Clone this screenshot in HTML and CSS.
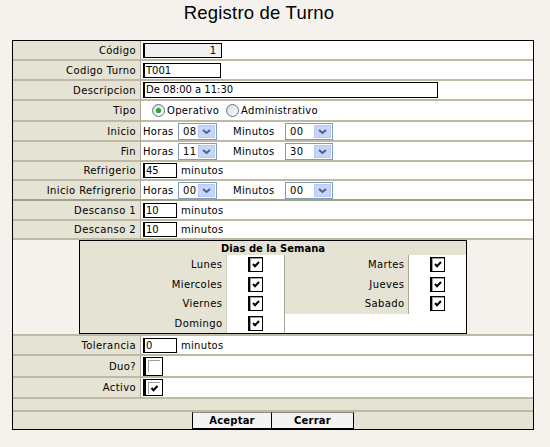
FILE: index.html
```html
<!DOCTYPE html>
<html lang="es">
<head>
<meta charset="utf-8">
<title>Registro de Turno</title>
<link rel="stylesheet" href="styles.css">
</head>
<body>
<div class="title">Registro de Turno</div>
<table class="form">
  <colgroup><col class="c1"><col class="c2"></colgroup>
  <tr><td class="lbl">Código</td><td class="val"><div class="c"><span class="tb ro w79">1</span></div></td></tr>
  <tr><td class="lbl">Codigo Turno</td><td class="val"><div class="c"><span class="tb w78">T001</span></div></td></tr>
  <tr><td class="lbl">Descripcion</td><td class="val"><div class="c"><span class="tb w295 tall">De 08:00 a 11:30</span></div></td></tr>
  <tr><td class="lbl">Tipo</td><td class="val"><div class="c h21">
    <span class="radio r1"><svg width="13" height="13" viewBox="0 0 13 13"><defs><linearGradient id="rg1" x1="0" y1="0" x2="1" y2="1"><stop offset="0" stop-color="#d8d8d2"/><stop offset="1" stop-color="#ffffff"/></linearGradient></defs><circle cx="6.5" cy="6.5" r="6" fill="url(#rg1)" stroke="#5a7694"/><circle cx="6.5" cy="6.5" r="2.6" fill="#2aa52a"/></svg></span>
    <span class="rtxt">Operativo</span>
    <span class="radio r2"><svg width="13" height="13" viewBox="0 0 13 13"><defs><linearGradient id="rg2" x1="0" y1="0" x2="1" y2="1"><stop offset="0" stop-color="#d8d8d2"/><stop offset="1" stop-color="#ffffff"/></linearGradient></defs><circle cx="6.5" cy="6.5" r="6" fill="url(#rg2)" stroke="#5a7694"/></svg></span>
    <span class="rtxt">Administrativo</span>
  </div></td></tr>
  <tr><td class="lbl">Inicio</td><td class="val"><div class="c">
    <span class="t-horas">Horas</span>
    <span class="sel s1"><span class="sv">08</span><svg class="arr" width="17" height="13" viewBox="0 0 17 13"><rect x="0.5" y="0.5" width="16" height="12" fill="#c6d5fb" stroke="#b7c8f5"/><path d="M5 5 L8.5 8 L12 5" fill="none" stroke="#4d6185" stroke-width="2"/></svg></span>
    <span class="t-min">Minutos</span>
    <span class="sel s2"><span class="sv">00</span><svg class="arr" width="17" height="13" viewBox="0 0 17 13"><rect x="0.5" y="0.5" width="16" height="12" fill="#c6d5fb" stroke="#b7c8f5"/><path d="M5 5 L8.5 8 L12 5" fill="none" stroke="#4d6185" stroke-width="2"/></svg></span>
  </div></td></tr>
  <tr><td class="lbl">Fin</td><td class="val"><div class="c">
    <span class="t-horas">Horas</span>
    <span class="sel s1"><span class="sv">11</span><svg class="arr" width="17" height="13" viewBox="0 0 17 13"><rect x="0.5" y="0.5" width="16" height="12" fill="#c6d5fb" stroke="#b7c8f5"/><path d="M5 5 L8.5 8 L12 5" fill="none" stroke="#4d6185" stroke-width="2"/></svg></span>
    <span class="t-min">Minutos</span>
    <span class="sel s2"><span class="sv">30</span><svg class="arr" width="17" height="13" viewBox="0 0 17 13"><rect x="0.5" y="0.5" width="16" height="12" fill="#c6d5fb" stroke="#b7c8f5"/><path d="M5 5 L8.5 8 L12 5" fill="none" stroke="#4d6185" stroke-width="2"/></svg></span>
  </div></td></tr>
  <tr><td class="lbl">Refrigerio</td><td class="val"><div class="c h19"><span class="tb w34">45</span><span class="unit">minutos</span></div></td></tr>
  <tr class="thick"><td class="lbl">Inicio Refrigrerio</td><td class="val"><div class="c">
    <span class="t-horas">Horas</span>
    <span class="sel s1"><span class="sv">00</span><svg class="arr" width="17" height="13" viewBox="0 0 17 13"><rect x="0.5" y="0.5" width="16" height="12" fill="#c6d5fb" stroke="#b7c8f5"/><path d="M5 5 L8.5 8 L12 5" fill="none" stroke="#4d6185" stroke-width="2"/></svg></span>
    <span class="t-min">Minutos</span>
    <span class="sel s2"><span class="sv">00</span><svg class="arr" width="17" height="13" viewBox="0 0 17 13"><rect x="0.5" y="0.5" width="16" height="12" fill="#c6d5fb" stroke="#b7c8f5"/><path d="M5 5 L8.5 8 L12 5" fill="none" stroke="#4d6185" stroke-width="2"/></svg></span>
  </div></td></tr>
  <tr><td class="lbl">Descanso 1</td><td class="val"><div class="c"><span class="tb w34">10</span><span class="unit">minutos</span></div></td></tr>
  <tr><td class="lbl">Descanso 2</td><td class="val"><div class="c h18"><span class="tb w34">10</span><span class="unit">minutos</span></div></td></tr>
  <tr><td colspan="2" class="days-cell">
    <table class="days">
      <colgroup><col class="d1"><col class="d2"><col class="d3"><col class="d4"></colgroup>
      <tr><th colspan="4">Dias de la Semana</th></tr>
      <tr>
        <td class="dl">Lunes</td>
        <td class="dc"><svg class="cb" width="15" height="15" viewBox="0 0 15 15"><rect width="15" height="15" fill="#000"/><rect x="2" y="1" width="12" height="13" fill="#fff"/><rect x="2" y="1" width="12" height="1" fill="#a0a0a0"/><rect x="2" y="1" width="1" height="13" fill="#a0a0a0"/><path d="M5 7 L7 9.2 L11 5" fill="none" stroke="#000" stroke-width="2"/></svg></td>
        <td class="dl2">Martes</td>
        <td class="dc2"><svg class="cb" width="15" height="15" viewBox="0 0 15 15"><rect width="15" height="15" fill="#000"/><rect x="2" y="1" width="12" height="13" fill="#fff"/><rect x="2" y="1" width="12" height="1" fill="#a0a0a0"/><rect x="2" y="1" width="1" height="13" fill="#a0a0a0"/><path d="M5 7 L7 9.2 L11 5" fill="none" stroke="#000" stroke-width="2"/></svg></td>
      </tr>
      <tr>
        <td class="dl">Miercoles</td>
        <td class="dc"><svg class="cb" width="15" height="15" viewBox="0 0 15 15"><rect width="15" height="15" fill="#000"/><rect x="2" y="1" width="12" height="13" fill="#fff"/><rect x="2" y="1" width="12" height="1" fill="#a0a0a0"/><rect x="2" y="1" width="1" height="13" fill="#a0a0a0"/><path d="M5 7 L7 9.2 L11 5" fill="none" stroke="#000" stroke-width="2"/></svg></td>
        <td class="dl2">Jueves</td>
        <td class="dc2"><svg class="cb" width="15" height="15" viewBox="0 0 15 15"><rect width="15" height="15" fill="#000"/><rect x="2" y="1" width="12" height="13" fill="#fff"/><rect x="2" y="1" width="12" height="1" fill="#a0a0a0"/><rect x="2" y="1" width="1" height="13" fill="#a0a0a0"/><path d="M5 7 L7 9.2 L11 5" fill="none" stroke="#000" stroke-width="2"/></svg></td>
      </tr>
      <tr>
        <td class="dl">Viernes</td>
        <td class="dc"><svg class="cb" width="15" height="15" viewBox="0 0 15 15"><rect width="15" height="15" fill="#000"/><rect x="2" y="1" width="12" height="13" fill="#fff"/><rect x="2" y="1" width="12" height="1" fill="#a0a0a0"/><rect x="2" y="1" width="1" height="13" fill="#a0a0a0"/><path d="M5 7 L7 9.2 L11 5" fill="none" stroke="#000" stroke-width="2"/></svg></td>
        <td class="dl2">Sabado</td>
        <td class="dc2"><svg class="cb" width="15" height="15" viewBox="0 0 15 15"><rect width="15" height="15" fill="#000"/><rect x="2" y="1" width="12" height="13" fill="#fff"/><rect x="2" y="1" width="12" height="1" fill="#a0a0a0"/><rect x="2" y="1" width="1" height="13" fill="#a0a0a0"/><path d="M5 7 L7 9.2 L11 5" fill="none" stroke="#000" stroke-width="2"/></svg></td>
      </tr>
      <tr>
        <td class="dl">Domingo</td>
        <td class="dc"><svg class="cb" width="15" height="15" viewBox="0 0 15 15"><rect width="15" height="15" fill="#000"/><rect x="2" y="1" width="12" height="13" fill="#fff"/><rect x="2" y="1" width="12" height="1" fill="#a0a0a0"/><rect x="2" y="1" width="1" height="13" fill="#a0a0a0"/><path d="M5 7 L7 9.2 L11 5" fill="none" stroke="#000" stroke-width="2"/></svg></td>
        <td class="dl2 blank"></td>
        <td class="dc2"></td>
      </tr>
    </table>
  </td></tr>
  <tr><td class="lbl">Tolerancia</td><td class="val"><div class="c"><span class="tb w34">0</span><span class="unit">minutos</span></div></td></tr>
  <tr><td class="lbl">Duo?</td><td class="val"><div class="c h22"><span class="bigcb tallcb"><span class="inner"></span></span></div></td></tr>
  <tr><td class="lbl">Activo</td><td class="val"><div class="c h21"><span class="bigcb"><span class="inner"><svg width="11" height="11" viewBox="0 0 11 11"><path d="M2.5 5 L4.5 7.2 L8.5 3" fill="none" stroke="#000" stroke-width="2"/></svg></span></span></div></td></tr>
  <tr class="empty"><td colspan="2"><div class="c h11"></div></td></tr>
  <tr class="btnrow"><td colspan="2"><div class="btns"><span class="btn b1">Aceptar</span><span class="btn b2">Cerrar</span></div></td></tr>
</table>
</body>
</html>
```

FILE: styles.css
```css
* { box-sizing: border-box; }

body {
  margin: 0;
  background: #f5f2ee;
  font-family: "DejaVu Sans", Verdana, sans-serif;
  font-size: 10px;
  color: #000;
}

.title {
  font-family: "Liberation Sans", Arial, sans-serif;
  font-size: 18.5px;
  letter-spacing: 0.2px;
  text-align: center;
  height: 40px;
  line-height: 25px;
  padding-right: 32px;
}

.form {
  margin-left: 12px;
  width: 522px;
  border: 1px solid #000;
  border-spacing: 0;
  background: #fff;
  table-layout: fixed;
}

.c1 { width: 128px; }

.form > tbody > tr > td,
.form > tr > td {
  padding: 0;
  border-bottom: 2px solid #bdb9a5;
}

.form .lbl {
  background: #e4e3d4;
  text-align: right;
  padding-right: 4px;
  border-right: 1px solid #aca899;
  letter-spacing: 0.4px;
  white-space: nowrap;
}

.form tr.thick > td { border-bottom: 2px solid #a39f8b; }

.c {
  height: 18px;
  display: flex;
  align-items: center;
  padding-left: 2px;
}
.h18 { height: 17px; }
.h19 { height: 17px; }
.h21 { height: 19px; }
.h22 { height: 20px; }
.h11 { height: 11px; }

.tb {
  display: inline-block;
  height: 15px;
  line-height: 13px;
  border: 1px solid #000;
  border-left-width: 2px;
  padding: 0 1px;
  background: #fff;
  white-space: nowrap;
}
.tb.tall { height: 16px; line-height: 14px; }
.tb.ro { background: #f0f0f0; text-align: right; padding-right: 5px; }
.w79 { width: 79px; }
.w78 { width: 78px; }
.w295 { width: 295px; }
.w34 { width: 34px; }

.unit { margin-left: 4px; letter-spacing: 0.3px; }

.radio { display: inline-flex; width: 13px; height: 13px; }
.r1 { margin-left: 9px; margin-right: 2px; }
.r2 { margin-left: 7px; margin-right: 2px; }
.rtxt { letter-spacing: 0.3px; }

.t-horas { width: 35px; letter-spacing: 0.3px; }
.t-min { width: 52px; margin-left: 16px; letter-spacing: 0.3px; }

.sel {
  display: inline-flex;
  align-items: center;
  justify-content: space-between;
  height: 17px;
  border: 1px solid #7f9db9;
  background: #fff;
  padding: 0 1px 0 4px;
}
.s1 { width: 39px; }
.s2 { width: 48px; }
.sv { letter-spacing: 0.5px; }
.arr { display: block; }

.days-cell { background: #f5f2ee; }

.days {
  margin: 0 auto;
  width: 387px;
  border: 1px solid #000;
  border-spacing: 0;
  background: #fff;
  table-layout: fixed;
}
.d1 { width: 147px; }
.d2 { width: 58px; }
.d3 { width: 124px; }
.d4 { width: 56px; }

.days th {
  background: #e4e3d4;
  font-weight: bold;
  height: 14px;
  padding: 0;
  line-height: 13px;
  font-size: 10px;
}
.days td {
  padding: 0;
  height: 19.5px;
}
.days .dl {
  background: #e4e3d4;
  text-align: right;
  padding-right: 4px;
  border-right: 1px solid #d4d1c2;
  letter-spacing: 0.4px;
}
.days .dc {
  text-align: center;
  border-right: 1px solid #aca899;
}
.days .dl2 {
  background: #e4e3d4;
  text-align: right;
  padding-right: 4px;
  border-right: 1px solid #aca899;
  letter-spacing: 0.4px;
}
.days .dl2.blank { background: #fff; border-right: none; }
.days .dc2 { text-align: center; }
.cb { display: inline-block; vertical-align: middle; }

.bigcb {
  display: inline-flex;
  align-items: center;
  justify-content: center;
  width: 20px;
  height: 17px;
  border: 1px solid #000;
  border-left-width: 3px;
  background: #fff;
}
.bigcb.tallcb { height: 19px; }
.bigcb .inner {
  display: inline-flex;
  width: 12px;
  height: 12px;
  border-top: 1px solid #a0a0a0;
  border-left: 1px solid #a0a0a0;
  background: #fff;
}

.form tr.empty > td { background: #e4e3d4; }
.form tr.btnrow > td { background: #e4e3d4; border-bottom: none; }

.btns {
  display: flex;
  justify-content: center;
  height: 17px;
}
.btn {
  display: inline-flex;
  align-items: center;
  justify-content: center;
  height: 17px;
  background: #f3f3f3;
  border: 1px solid #000;
  border-top-color: #8e8b7c;
  font-weight: bold;
  letter-spacing: 0.2px;
}
.b1 { width: 80px; }
.b2 { width: 82px; border-left: none; }
```
